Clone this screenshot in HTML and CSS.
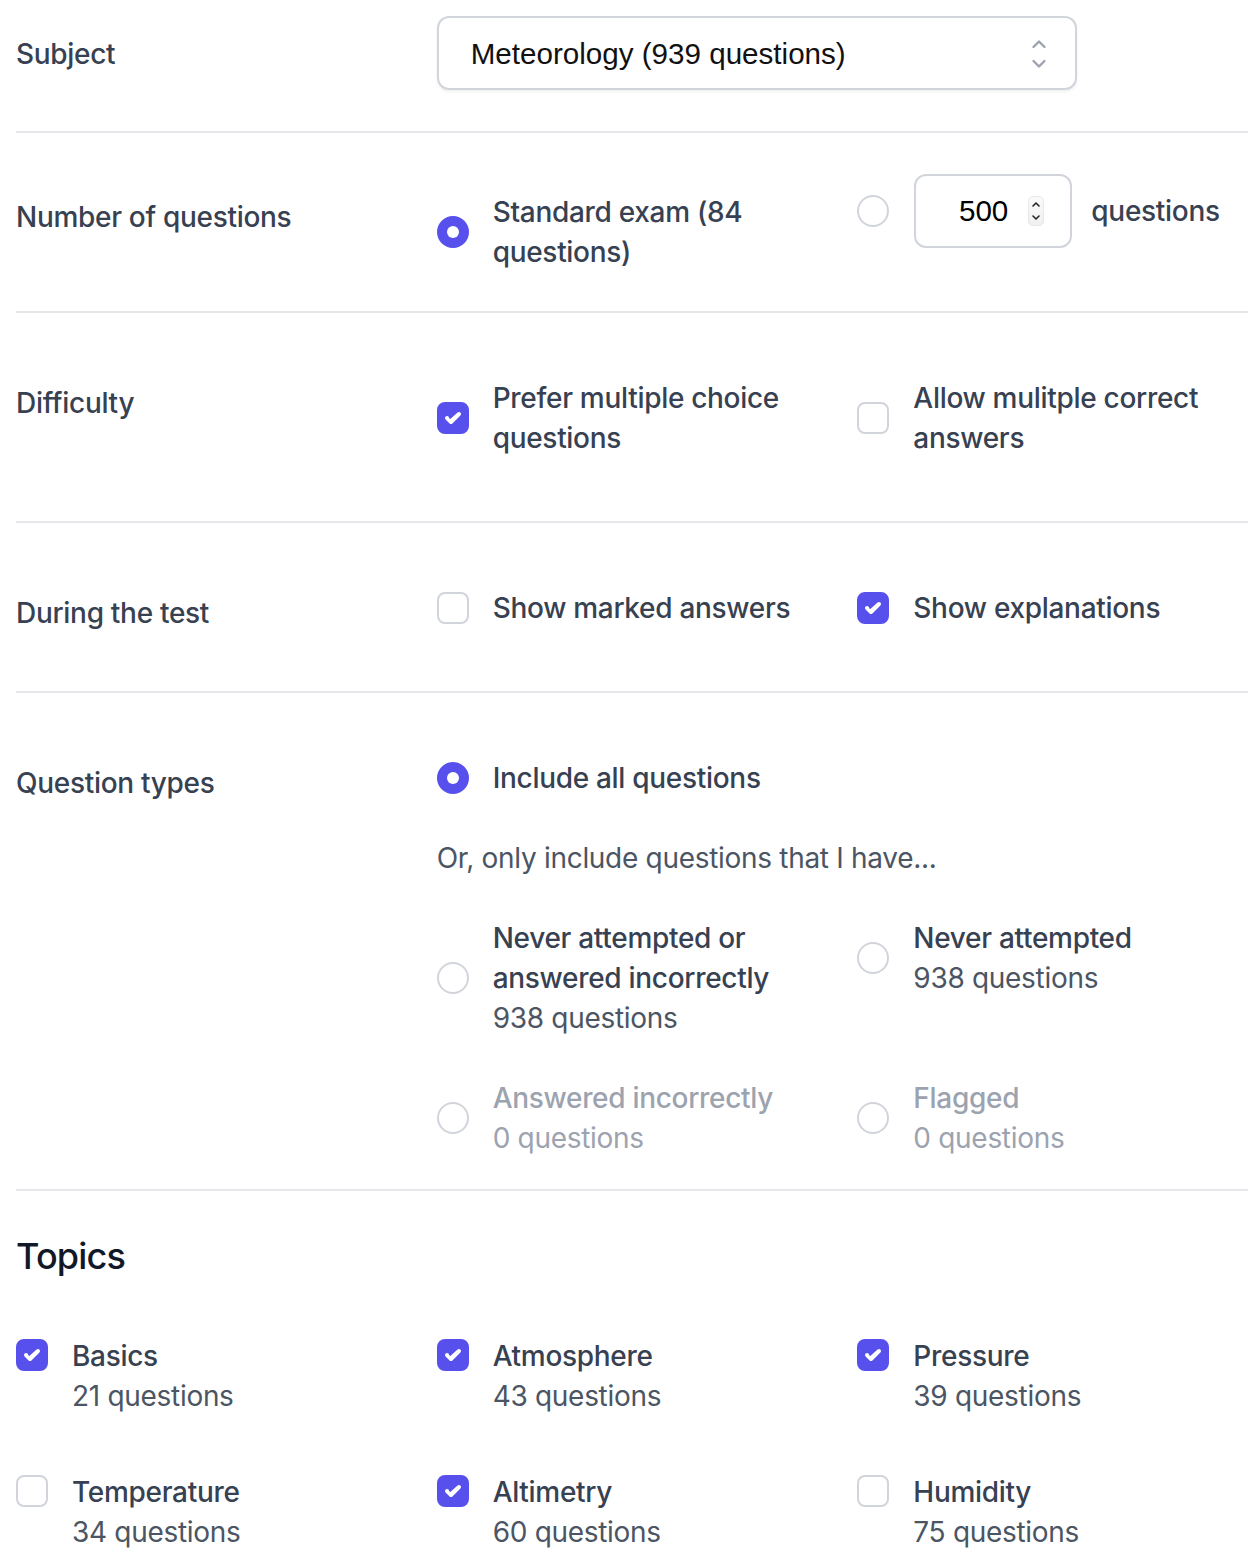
FILE: index.html
```html
<!DOCTYPE html>
<html lang="en">
<head>
<meta charset="utf-8">
<title>Test settings</title>
<link rel="stylesheet" href="styles.css">
</head>
<body>
<div class="page">
  <section class="row row-subject">
    <div class="label label-center">Subject</div>
    <div class="content">
      <div class="select">
        <span class="select-text">Meteorology (939 questions)</span>
        <svg class="select-icon" width="16" height="32" viewBox="0 0 16 32"><path d="M2.5 9 L8 3.5 L13.5 9 M2.5 23 L8 28.5 L13.5 23" fill="none" stroke="#9ca3af" stroke-width="2.4" stroke-linecap="round" stroke-linejoin="round"/></svg>
      </div>
    </div>
  </section>

  <section class="row row-number">
    <div class="label label-number">Number of questions</div>
    <div class="content cols">
      <div class="opt opt-standard">
        <span class="radio on"></span>
        <span class="opt-title">Standard exam (84 questions)</span>
      </div>
      <div class="opt opt-custom">
        <span class="radio"></span>
        <div class="num">
          <span class="num-text">500</span>
          <span class="spin">
            <svg width="14" height="28" viewBox="0 0 14 28"><path d="M4 9 L7 6 L10 9 M4 19 L7 22 L10 19" fill="none" stroke="#222" stroke-width="1.6" stroke-linecap="round" stroke-linejoin="round"/></svg>
          </span>
        </div>
        <span class="opt-title">questions</span>
      </div>
    </div>
  </section>

  <section class="row row-std">
    <div class="label">Difficulty</div>
    <div class="content cols">
      <div class="opt">
        <span class="cb on"><svg viewBox="0 0 16 16" width="32" height="32"><path fill="#fff" d="M5.707 7.293a1 1 0 0 0-1.414 1.414l2 2a1 1 0 0 0 1.414 0l4-4a1 1 0 0 0-1.414-1.414L6.5 8.586 5.707 7.293z"/></svg></span>
        <span class="opt-title">Prefer multiple choice questions</span>
      </div>
      <div class="opt">
        <span class="cb"></span>
        <span class="opt-title">Allow mulitple correct answers</span>
      </div>
    </div>
  </section>

  <section class="row row-std">
    <div class="label">During the test</div>
    <div class="content cols">
      <div class="opt">
        <span class="cb"></span>
        <span class="opt-title">Show marked answers</span>
      </div>
      <div class="opt">
        <span class="cb on"><svg viewBox="0 0 16 16" width="32" height="32"><path fill="#fff" d="M5.707 7.293a1 1 0 0 0-1.414 1.414l2 2a1 1 0 0 0 1.414 0l4-4a1 1 0 0 0-1.414-1.414L6.5 8.586 5.707 7.293z"/></svg></span>
        <span class="opt-title">Show explanations</span>
      </div>
    </div>
  </section>

  <section class="row row-types">
    <div class="label">Question types</div>
    <div class="content stack">
      <div class="opt">
        <span class="radio on"></span>
        <span class="opt-title">Include all questions</span>
      </div>
      <p class="hint">Or, only include questions that I have...</p>
      <div class="cols cols-gap">
        <div class="opt">
          <span class="radio"></span>
          <span class="opt-body"><span class="opt-title">Never attempted or answered incorrectly</span><span class="opt-sub">938 questions</span></span>
        </div>
        <div class="opt">
          <span class="radio"></span>
          <span class="opt-body"><span class="opt-title">Never attempted</span><span class="opt-sub">938 questions</span></span>
        </div>
        <div class="opt disabled">
          <span class="radio"></span>
          <span class="opt-body"><span class="opt-title">Answered incorrectly</span><span class="opt-sub">0 questions</span></span>
        </div>
        <div class="opt disabled">
          <span class="radio"></span>
          <span class="opt-body"><span class="opt-title">Flagged</span><span class="opt-sub">0 questions</span></span>
        </div>
      </div>
    </div>
  </section>

  <section class="topics">
    <h2 class="topics-title">Topics</h2>
    <div class="topic-grid">
      <div class="topic">
        <span class="cb on"><svg viewBox="0 0 16 16" width="32" height="32"><path fill="#fff" d="M5.707 7.293a1 1 0 0 0-1.414 1.414l2 2a1 1 0 0 0 1.414 0l4-4a1 1 0 0 0-1.414-1.414L6.5 8.586 5.707 7.293z"/></svg></span>
        <span class="opt-body"><span class="opt-title">Basics</span><span class="opt-sub">21 questions</span></span>
      </div>
      <div class="topic">
        <span class="cb on"><svg viewBox="0 0 16 16" width="32" height="32"><path fill="#fff" d="M5.707 7.293a1 1 0 0 0-1.414 1.414l2 2a1 1 0 0 0 1.414 0l4-4a1 1 0 0 0-1.414-1.414L6.5 8.586 5.707 7.293z"/></svg></span>
        <span class="opt-body"><span class="opt-title">Atmosphere</span><span class="opt-sub">43 questions</span></span>
      </div>
      <div class="topic">
        <span class="cb on"><svg viewBox="0 0 16 16" width="32" height="32"><path fill="#fff" d="M5.707 7.293a1 1 0 0 0-1.414 1.414l2 2a1 1 0 0 0 1.414 0l4-4a1 1 0 0 0-1.414-1.414L6.5 8.586 5.707 7.293z"/></svg></span>
        <span class="opt-body"><span class="opt-title">Pressure</span><span class="opt-sub">39 questions</span></span>
      </div>
      <div class="topic">
        <span class="cb"></span>
        <span class="opt-body"><span class="opt-title">Temperature</span><span class="opt-sub">34 questions</span></span>
      </div>
      <div class="topic">
        <span class="cb on"><svg viewBox="0 0 16 16" width="32" height="32"><path fill="#fff" d="M5.707 7.293a1 1 0 0 0-1.414 1.414l2 2a1 1 0 0 0 1.414 0l4-4a1 1 0 0 0-1.414-1.414L6.5 8.586 5.707 7.293z"/></svg></span>
        <span class="opt-body"><span class="opt-title">Altimetry</span><span class="opt-sub">60 questions</span></span>
      </div>
      <div class="topic">
        <span class="cb"></span>
        <span class="opt-body"><span class="opt-title">Humidity</span><span class="opt-sub">75 questions</span></span>
      </div>
    </div>
  </section>
</div>
</body>
</html>
```

FILE: styles.css
```css
* { box-sizing: border-box; }
html, body { margin: 0; padding: 0; background: #fff; }
body {
  font-family: Inter, "Noto Sans", sans-serif;
  font-size: 28px;
  line-height: 40px;
  letter-spacing: -0.3px;
  color: #374151;
}
.page { padding-left: 16px; padding-bottom: 10px; }

.row {
  display: grid;
  grid-template-columns: repeat(3, 1fr);
  column-gap: 32px;
  border-top: 2px solid #e5e7eb;
  padding: 65px 2px 63px 0;
}
.row-subject { border-top: none; padding: 16px 2px 41px 0; }
.row-number { padding: 41px 2px 39px 0; }
.row-types { padding-bottom: 31px; }

.label {
  font-weight: 500;
  color: #374151;
  padding-top: 5px;
  margin-bottom: -5px;
}
.label-center { align-self: center; padding-top: 2px; margin-bottom: 0; }
.label-number { padding-top: 23px; margin-bottom: -23px; }

.content { grid-column: 2 / span 2; }
.cols {
  display: grid;
  grid-template-columns: 1fr 1fr;
  column-gap: 32px;
  align-items: start;
}
.cols-gap { row-gap: 40px; }
.stack { display: flex; flex-direction: column; gap: 40px; }

.select {
  width: 640px;
  height: 74px;
  border: 2px solid #d1d5db;
  border-radius: 12px;
  box-shadow: 0 2px 3px rgba(0,0,0,0.06);
  display: flex;
  align-items: center;
  justify-content: space-between;
  padding: 2px 28px 0 32px;
  font-family: "Liberation Sans", Arial, sans-serif;
  font-size: 29.6px;
  letter-spacing: 0;
  color: #111;
}
.select-icon { display: block; margin-top: 0; }

.opt {
  display: flex;
  align-items: center;
  gap: 24px;
}
.opt-standard { margin-top: 18px; align-self: start; }
.opt-custom { align-self: start; gap: 0; }
.opt-custom .radio { margin-right: 25px; }
.opt-custom .opt-title { margin-left: 19px; }

.opt-title { font-weight: 500; color: #374151; }
.opt-body { display: flex; flex-direction: column; }
.opt-sub { font-weight: 400; color: #4b5563; }
.disabled .opt-title, .disabled .opt-sub { color: #9ca3af; }

.hint { margin: 0; color: #4b5563; font-weight: 400; }

.radio {
  flex: none;
  width: 32px;
  height: 32px;
  border-radius: 50%;
  border: 2px solid #d1d5db;
  background: #fff;
  display: flex;
  align-items: center;
  justify-content: center;
}
.radio.on { background: #5850ec; border-color: #5850ec; }
.radio.on::after {
  content: "";
  width: 12px;
  height: 12px;
  border-radius: 50%;
  background: #fff;
}

.cb {
  flex: none;
  width: 32px;
  height: 32px;
  border-radius: 8px;
  border: 2px solid #d1d5db;
  background: #fff;
  display: flex;
  align-items: center;
  justify-content: center;
  overflow: hidden;
}
.cb.on { background: #5850ec; border-color: #5850ec; }
.cb svg { flex: none; display: block; }

.num {
  width: 158px;
  height: 74px;
  border: 2px solid #d1d5db;
  border-radius: 12px;
  display: flex;
  align-items: center;
  justify-content: flex-end;
  padding-right: 26px;
  font-family: "Liberation Sans", Arial, sans-serif;
  font-size: 29.6px;
  letter-spacing: 0;
  color: #000;
}
.num-text { margin-right: 20px; }
.spin {
  width: 16px;
  height: 30px;
  border: 1px solid #e5e7eb;
  border-radius: 5px;
  display: flex;
  align-items: center;
  justify-content: center;
  background: linear-gradient(#fafafa, #f0f0f0);
}
.spin svg { display: block; }

.topics {
  border-top: 2px solid #e5e7eb;
  padding-top: 37px;
}
.topics-title {
  margin: 0 0 52px;
  font-size: 36px;
  line-height: 56px;
  font-weight: 500;
  letter-spacing: -0.8px;
  color: #111827;
}
.topic-grid {
  display: grid;
  grid-template-columns: repeat(3, 1fr);
  column-gap: 32px;
  row-gap: 56px;
  padding-right: 2px;
}
.topic {
  display: flex;
  align-items: flex-start;
  gap: 24px;
}
.topic .cb { margin-top: 3px; }
```
